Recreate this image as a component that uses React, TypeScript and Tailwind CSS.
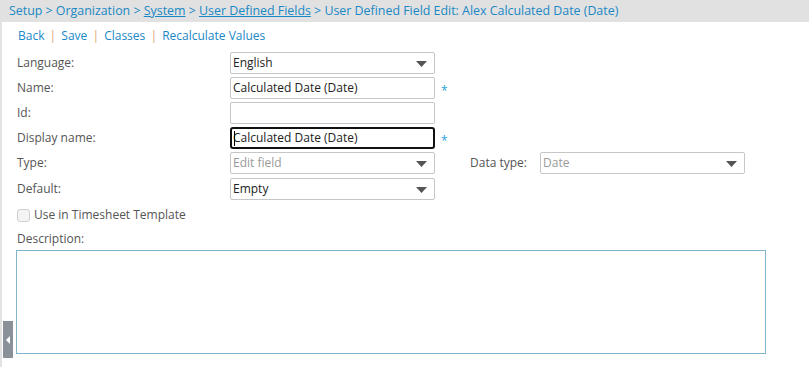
import React from 'react';

const font = { fontFamily: '"Open Sans", "Noto Sans", sans-serif' };

const Arrow: React.FC = () => (
  <svg width="11" height="6" viewBox="0 0 11 6" className="absolute right-[7px] top-[8px]">
    <path d="M0 0 H11 L5.5 6 Z" fill="#555" />
  </svg>
);

const Select: React.FC<{ value: string; disabled?: boolean }> = ({ value, disabled }) => (
  <div
    className={`relative w-[205px] h-[22px] border border-[#c6c6c6] rounded-[2px] bg-white pl-[2px] text-[12px] leading-[20px] ${
      disabled ? 'text-[#9a9a9a]' : 'text-[#222]'
    }`}
  >
    {value}
    <Arrow />
  </div>
);

const Input: React.FC<{ value?: string; focused?: boolean }> = ({ value, focused }) =>
  focused ? (
    <div className="relative w-[205px] h-[22px] border-2 border-[#111] rounded-[3px] bg-white pl-[1px] text-[12px] leading-[18px] text-[#222]">
      <span className="absolute left-[2px] top-[2px] w-px h-[15px] bg-black" />
      {value}
    </div>
  ) : (
    <div className="w-[205px] h-[22px] border border-[#c6c6c6] rounded-[2px] bg-white pl-[2px] text-[12px] leading-[20px] text-[#222]">
      {value}
    </div>
  );

const Star: React.FC = () => <span className="ml-[6px] text-[#2a9fd8] text-[12px] leading-none mt-[6px]">*</span>;

const Row: React.FC<{ label: string; children: React.ReactNode; className?: string }> = ({ label, children, className }) => (
  <div className={`flex items-center ${className || ''}`}>
    <div className="w-[213px] text-[12px] text-[#555]">{label}</div>
    {children}
  </div>
);

export default function App() {
  return (
    <div className="w-[809px] h-[367px] bg-white overflow-hidden relative" style={font}>
      {/* Breadcrumb */}
      <div className="h-[22px] bg-[#e1e1e1] pl-[9px] text-[12.4px] leading-[22px] text-[#1a88c6] whitespace-nowrap">
        Setup &gt; Organization &gt; <span className="underline">System</span> &gt;{' '}
        <span className="underline">User Defined Fields</span> &gt; User Defined Field Edit: Alex Calculated Date (Date)
      </div>

      <div className="flex h-[345px]">
        <div className="w-[2px] bg-[#e2e2e2]" />
        <div className="flex-1 pl-[15px]">
          {/* Actions */}
          <div className="pt-[5px] h-[30px] text-[12px] leading-[18px] text-[#1a88c6] pl-[1px]">
            Back <span className="text-[#e3a473] mx-[2px]">|</span> Save{' '}
            <span className="text-[#e3a473] mx-[2px]">|</span> Classes{' '}
            <span className="text-[#e3a473] mx-[2px]">|</span> Recalculate Values
          </div>

          <div className="flex flex-col gap-[3px]">
            <Row label="Language:">
              <Select value="English" />
            </Row>
            <Row label="Name:">
              <Input value="Calculated Date (Date)" />
              <Star />
            </Row>
            <Row label="Id:">
              <Input />
            </Row>
            <Row label="Display name:">
              <Input value="Calculated Date (Date)" focused />
              <Star />
            </Row>
            <Row label="Type:">
              <Select value="Edit field" disabled />
              <div className="ml-[35px] w-[70px] text-[12px] text-[#555]">Data type:</div>
              <Select value="Date" disabled />
            </Row>
            <Row label="Default:" className="mt-[1px]">
              <Select value="Empty" />
            </Row>
          </div>

          <label className="flex items-center mt-[6px] text-[12px] text-[#555]">
            <span className="w-[13px] h-[13px] border border-[#cfcfcf] rounded-[3px] bg-[#f4f4f4] mr-[4px]" />
            Use in Timesheet Template
          </label>

          <div className="mt-[6px] text-[12px] text-[#555]">Description:</div>
          <div className="mt-[2px] -ml-[1px] w-[750px] h-[104px] border border-[#80b4cc] bg-white" />
        </div>
      </div>

      {/* Collapse handle */}
      <div className="absolute left-[3px] top-[321px] w-[10px] h-[37px] bg-[#8a9199] flex items-center justify-center">
        <svg width="4" height="8" viewBox="0 0 4 8">
          <path d="M4 0 V8 L0 4 Z" fill="#fff" />
        </svg>
      </div>
    </div>
  );
}
